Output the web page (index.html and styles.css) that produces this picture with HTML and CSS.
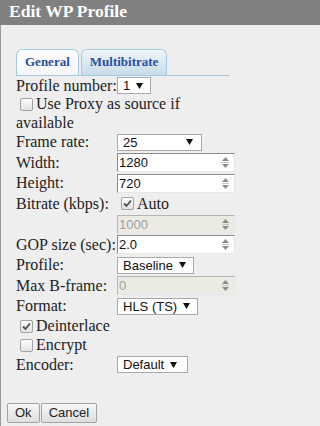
FILE: index.html
```html
<!DOCTYPE html>
<html>
<head>
<meta charset="utf-8">
<link rel="stylesheet" href="styles.css">
</head>
<body>
<div class="titlebar">Edit WP Profile</div>
<div class="dialog">
  <div class="content">
    <div class="tabs">
      <div class="tab active">General</div>
      <div class="tab">Multibitrate</div>
    </div>
    <div class="profile-row">
      <span>Profile number:</span>
      <span class="select">1<svg class="arrow" width="7" height="6" viewBox="0 0 7 6"><polygon points="0,0 7,0 3.5,6"/></svg></span>
    </div>
    <div class="proxy"><span class="cb"></span>Use Proxy as source if available</div>
    <div class="form">
      <span class="label">Frame rate:</span>
      <span class="select frame">25<svg class="arrow" width="7" height="6" viewBox="0 0 7 6"><polygon points="0,0 7,0 3.5,6"/></svg></span>

      <span class="label">Width:</span>
      <span class="num"><span>1280</span><svg class="spin" width="7" height="11" viewBox="0 0 7 11"><polygon points="3.5,0 7,4 0,4"/><rect x="0" y="5" width="7" height="1" class="mid"/><polygon points="0,7 7,7 3.5,11"/></svg></span>

      <span class="label">Height:</span>
      <span class="num"><span>720</span><svg class="spin" width="7" height="11" viewBox="0 0 7 11"><polygon points="3.5,0 7,4 0,4"/><rect x="0" y="5" width="7" height="1" class="mid"/><polygon points="0,7 7,7 3.5,11"/></svg></span>

      <span class="label">Bitrate (kbps):</span>
      <span class="checkline"><span class="cb checked"><svg width="11" height="11" viewBox="0 0 11 11"><path d="M2 5.5 L4.5 8 L9 2.5"/></svg></span>Auto</span>

      <span class="label"></span>
      <span class="num disabled"><span>1000</span><svg class="spin" width="7" height="11" viewBox="0 0 7 11"><polygon points="3.5,0 7,4 0,4"/><rect x="0" y="5" width="7" height="1" class="mid"/><polygon points="0,7 7,7 3.5,11"/></svg></span>

      <span class="label">GOP size (sec):</span>
      <span class="num"><span>2.0</span><svg class="spin" width="7" height="11" viewBox="0 0 7 11"><polygon points="3.5,0 7,4 0,4"/><rect x="0" y="5" width="7" height="1" class="mid"/><polygon points="0,7 7,7 3.5,11"/></svg></span>

      <span class="label">Profile:</span>
      <span class="select">Baseline<svg class="arrow" width="7" height="6" viewBox="0 0 7 6"><polygon points="0,0 7,0 3.5,6"/></svg></span>

      <span class="label">Max B-frame:</span>
      <span class="num disabled"><span>0</span><svg class="spin" width="7" height="11" viewBox="0 0 7 11"><polygon points="3.5,0 7,4 0,4"/><rect x="0" y="5" width="7" height="1" class="mid"/><polygon points="0,7 7,7 3.5,11"/></svg></span>

      <span class="label">Format:</span>
      <span class="select">HLS (TS)<svg class="arrow" width="7" height="6" viewBox="0 0 7 6"><polygon points="0,0 7,0 3.5,6"/></svg></span>
    </div>
    <div class="check-row"><span class="cb checked"><svg width="11" height="11" viewBox="0 0 11 11"><path d="M2 5.5 L4.5 8 L9 2.5"/></svg></span>Deinterlace</div>
    <div class="check-row"><span class="cb"></span>Encrypt</div>
    <div class="encoder-row">
      <span class="label">Encoder:</span>
      <span class="select encoder">Default<svg class="arrow" width="7" height="6" viewBox="0 0 7 6"><polygon points="0,0 7,0 3.5,6"/></svg></span>
    </div>
  </div>
  <div class="buttons">
    <button class="btn">Ok</button>
    <button class="btn">Cancel</button>
  </div>
</div>
</body>
</html>
```
FILE: styles.css
```css
html, body {
  margin: 0;
  background: #eeeeee;
}
body {
  display: flex;
  flex-direction: column;
  height: 100vh;
  overflow: hidden;
  font-family: "Liberation Serif", serif;
  font-size: 16px;
  color: #222;
}
.titlebar {
  flex: none;
  height: 25px;
  line-height: 23px;
  background: #808080;
  color: #fff;
  font-weight: bold;
  font-size: 17.5px;
  padding-left: 9px;
  white-space: nowrap;
}
.dialog {
  flex: 1;
  min-height: 0;
  border-left: 1px solid #9a9a9a;
}
.content {
  padding-left: 15px;
}
.tabs {
  display: flex;
  align-items: flex-end;
  gap: 2px;
  margin-top: 24px;
  width: 213px;
  height: 26px;
  border-bottom: 1px solid #a6c9e2;
}
.tab {
  line-height: 23px;
  padding: 0 8px 2px 8px;
  box-sizing: border-box;
  height: 26px;
  border: 1px solid #a6c9e2;
  border-bottom: none;
  border-radius: 6px 6px 0 0;
  font-size: 13px;
  font-weight: bold;
  color: #2a4fa0;
  background: linear-gradient(#f0f6fa, #c6dbe8);
}
.tab.active {
  background: linear-gradient(#ffffff, #f3f6f8);
}
.profile-row {
  display: flex;
  align-items: center;
  height: 19px;
  white-space: nowrap;
}
.proxy {
  width: 195px;
  line-height: 18.5px;
}
.cb {
  display: inline-flex;
  align-items: center;
  justify-content: center;
  width: 13px;
  height: 13px;
  box-sizing: border-box;
  margin: 0 3px 0 4px;
  vertical-align: -2px;
  border: 1px solid #a3a3a3;
  border-radius: 2px;
  background: linear-gradient(#fdfdfd, #e2e2e2);
}
.cb svg path {
  fill: none;
  stroke: #4d4d4d;
  stroke-width: 1.8;
}
.form {
  display: grid;
  grid-template-columns: 101px 118px;
  grid-auto-rows: 20.5px;
  align-items: center;
  white-space: nowrap;
}
.label {
  white-space: nowrap;
}
.select {
  display: inline-flex;
  align-items: center;
  justify-self: start;
  gap: 6px;
  box-sizing: border-box;
  height: 17px;
  padding: 0 7px 0 5px;
  border: 1px solid #a9a9a9;
  background: #fff;
  color: #111;
  font-family: "Liberation Sans", sans-serif;
  font-size: 13px;
}
.select .arrow {
  fill: #111;
}
.select.frame {
  width: 85px;
  justify-content: space-between;
  padding-right: 8px;
}
.select.encoder {
  width: 71px;
}
.num {
  display: flex;
  align-items: center;
  box-sizing: border-box;
  height: 19px;
  padding-left: 1px;
  border: 1px solid;
  border-color: #8a8a8a #e6e6e6 #e6e6e6 #8a8a8a;
  background: #fff;
  color: #111;
  font-family: "Liberation Sans", sans-serif;
  font-size: 13px;
}
.num .spin {
  margin-left: auto;
  margin-right: 5px;
  fill: #8c8c8c;
}
.num .spin .mid {
  fill: #c4c4c4;
}
.num.disabled {
  background: #ebebe4;
  color: #a0a0a0;
  border-color: #b5b5b5 #e6e6e6 #e6e6e6 #b5b5b5;
}
.checkline {
  display: flex;
  align-items: center;
}
.check-row {
  display: flex;
  align-items: center;
  height: 19px;
}
.encoder-row {
  display: flex;
  align-items: center;
  height: 20px;
}
.encoder-row .label {
  width: 101px;
}
.buttons {
  display: flex;
  gap: 1px;
  padding: 28px 0 0 6px;
}
.btn {
  height: 20px;
  padding: 0 7px;
  margin: 0;
  border: 1px solid #a3a3a3;
  border-radius: 2px;
  background: linear-gradient(#f7f7f7, #dedede);
  color: #222;
  font-family: "Liberation Sans", sans-serif;
  font-size: 13px;
}
```
